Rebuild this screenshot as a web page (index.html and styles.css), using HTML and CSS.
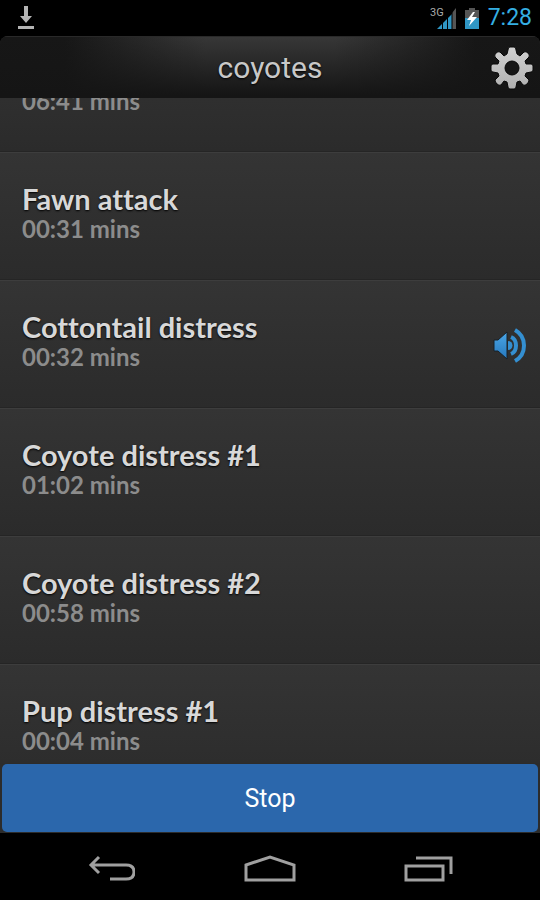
FILE: index.html
```html
<!DOCTYPE html>
<html lang="en">
<head>
<meta charset="utf-8">
<meta name="viewport" content="width=device-width, initial-scale=1">
<title>coyotes</title>
<link rel="stylesheet" href="styles.css">
</head>
<body>
<div class="status">
  <svg class="download" width="18" height="24" viewBox="0 0 18 24" aria-hidden="true"><path d="M7 0h4v10h4l-6 7-6-7h4zM1 20h16v3H1z" fill="#b4b4b4"/></svg>
  <div class="indicators">
    <svg width="28" height="24" viewBox="0 0 28 24" aria-hidden="true">
      <path d="M7 23 22 8v15z" fill="#2f96c4"/><path d="M22 7l4-5v21h-4z" fill="#555"/>
      <path d="M12.500 12v12M17.500 8v16M22 3v20" stroke="#000"/>
      <text class="network" x="0" y="10">3G</text>
    </svg>
    <svg width="16" height="24" viewBox="0 0 16 24" aria-hidden="true">
      <path d="M1 4h4V2h6v2h4v8H1z" fill="#555"/><path d="M1 12h14v11H1z" fill="#2f96c4"/>
      <path d="M9 6 3 14h4l-2 6 8-9H8l3-5z" fill="#fff"/>
    </svg>
    <span class="clock">7:28</span>
  </div>
</div>
<main class="app">
  <header class="bar">
    <h1 class="heading">coyotes</h1>
    <button class="settings" type="button" aria-label="Settings">
      <svg width="44" height="44" viewBox="-22 -22 44 44" aria-hidden="true">
        <defs>
          <linearGradient id="steel" x1="0" y1="0" x2="0" y2="1"><stop offset="0" stop-color="#d2d2d2"/><stop offset="1" stop-color="#b0b0b0"/></linearGradient>
        </defs>
        <path fill="url(#steel)" stroke="#080808" stroke-linejoin="round" fill-rule="evenodd" d="M-2-21H2Q4-21 4-18L5-14 8-12 12-16Q14-17 16-15T17-11L13-7 14-4 19-4Q21-4 21-2V2Q21 4 19 4L14 5 13 8 17 12Q17 14 15 16T11 17L8 13 5 14 4 19Q4 21 2 21H-2Q-4 21-4 19L-5 14-8 13-11 17Q-13 18-15 16T-17 12L-13 8-14 5-19 4Q-21 4-21 2V-2Q-21-4-19-4L-14-4-13-7-17-11Q-18-13-16-15T-12-16L-8-12-5-14-4-18Q-4-21-2-21ZM0-7A7 7 0 1 0 0 7 7 7 0 1 0 0-7Z"/>
      </svg>
    </button>
  </header>
  <div class="viewport">
    <ul class="tracks">
      <li class="track clipped"><span class="time">06:41 mins</span></li>
      <li class="track"><div><h2 class="name">Fawn attack</h2><span class="time">00:31 mins</span></div></li>
      <li class="track">
        <div><h2 class="name">Cottontail distress</h2><span class="time">00:32 mins</span></div>
        <svg class="playing" width="36" height="38" viewBox="0 0 36 38" aria-hidden="true">
          <defs><linearGradient id="sound" x1="0" y1="0" x2="0" y2="1"><stop offset="0" stop-color="#4ba7e8"/><stop offset="1" stop-color="#2678bd"/></linearGradient></defs>
          <path d="M1 14h4L14 6v27l-9-8H1z" fill="url(#sound)" stroke="#172028"/>
          <path d="M15 15a4 4 0 0 1 0 9z" fill="#348fd1"/>
          <g fill="none" stroke="#348fd1" stroke-width="4"><path d="M18 11q5 2 5 8.500T18 28"/><path d="M22 4q9 5 9 15.500T22 35"/></g>
        </svg>
      </li>
      <li class="track"><div><h2 class="name">Coyote distress #1</h2><span class="time">01:02 mins</span></div></li>
      <li class="track"><div><h2 class="name">Coyote distress #2</h2><span class="time">00:58 mins</span></div></li>
      <li class="track"><div><h2 class="name">Pup distress #1</h2><span class="time">00:04 mins</span></div></li>
    </ul>
  </div>
  <button class="stop" type="button">Stop</button>
</main>
<nav class="system">
  <button type="button" aria-label="Back"><svg width="48" height="28" viewBox="0 0 48 28" aria-hidden="true"><path d="M12 2 4 10l8 8M4 10h35q8 0 8 7t-8 7H23"/></svg></button>
  <button type="button" aria-label="Home"><svg width="52" height="28" viewBox="0 0 52 28" aria-hidden="true"><path d="M2 10 26 2l24 8v15H2z"/></svg></button>
  <button type="button" aria-label="Recent apps"><svg width="50" height="28" viewBox="0 0 50 28" aria-hidden="true"><path d="M2 11h37v14H2zM12 3h35v16"/></svg></button>
</nav>
</body>
</html>
```
FILE: styles.css
```css
* { box-sizing: border-box; }
body {
  margin: 0;
  height: 100vh;
  display: flex;
  flex-direction: column;
  background: #000;
  font-family: Roboto, sans-serif;
}
button { border: 0; padding: 0; background: none; font: inherit; }
svg { display: block; }
h1, h2, ul { margin: 0; padding: 0; }
.status {
  flex: none;
  height: 36px;
  padding: 0 8px 0 17px;
  display: flex;
  align-items: center;
  justify-content: space-between;
}
.indicators { display: flex; align-items: center; gap: 6px; }
.network { font: 11px Roboto, sans-serif; fill: #aaa; }
.clock { margin-left: 2px; font-size: 23px; line-height: 36px; color: #35afe3; }
.app {
  flex: 1;
  min-height: 0;
  display: flex;
  flex-direction: column;
  border-radius: 8px 8px 0 0;
  overflow: hidden;
  background: #2c2c2c;
}
.bar {
  flex: none;
  height: 62px;
  padding: 0 6px;
  display: grid;
  grid-template-columns: 44px 1fr 44px;
  align-items: center;
  background:
    linear-gradient(to bottom, transparent, #151515 95%),
    linear-gradient(to right, #171717 12%, #373737 38%, #373737 62%, #171717 88%);
  border-top: 1px solid #292929;
}
.heading {
  grid-column: 2;
  text-align: center;
  font-size: 30px;
  line-height: 36px;
  font-weight: 400;
  color: #c8c8c8;
  text-shadow: 0 1px 2px #000;
}
.viewport { flex: 1; min-height: 0; overflow: hidden; }
.tracks { margin-top: -11px; list-style: none; }
.track {
  height: 128px;
  padding: 30px 11px 0 22px;
  display: flex;
  justify-content: space-between;
  border-top: 1px solid #3d3d3d;
  border-bottom: 1px solid #252525;
  background: linear-gradient(#343434, #2b2b2b);
  font-family: Lato, sans-serif;
  font-variant-ligatures: none;
}
.clipped { height: 65px; padding-top: 0; border-top: 0; background: linear-gradient(#303030, #2b2b2b); }
.name {
  font-size: 29px;
  line-height: 32px;
  font-weight: 700;
  color: #d8d8d8;
  text-shadow: 0 1px 2px #000;
}
.time { display: block; font-size: 24px; line-height: 27px; font-weight: 700; color: #8c8c8c; }
.playing { margin-top: 15px; }
.stop {
  flex: none;
  height: 68px;
  margin: 1px 2px;
  border-radius: 5px;
  background: #2b67ac;
  color: #fff;
  font-size: 25px;
}
.system {
  flex: none;
  height: 67px;
  padding: 4px 32px 0;
  display: grid;
  grid-template-columns: repeat(3, 1fr);
}
.system button { display: grid; place-items: center; }
.system svg { fill: none; stroke: #a0a0a0; stroke-width: 3; }
```
